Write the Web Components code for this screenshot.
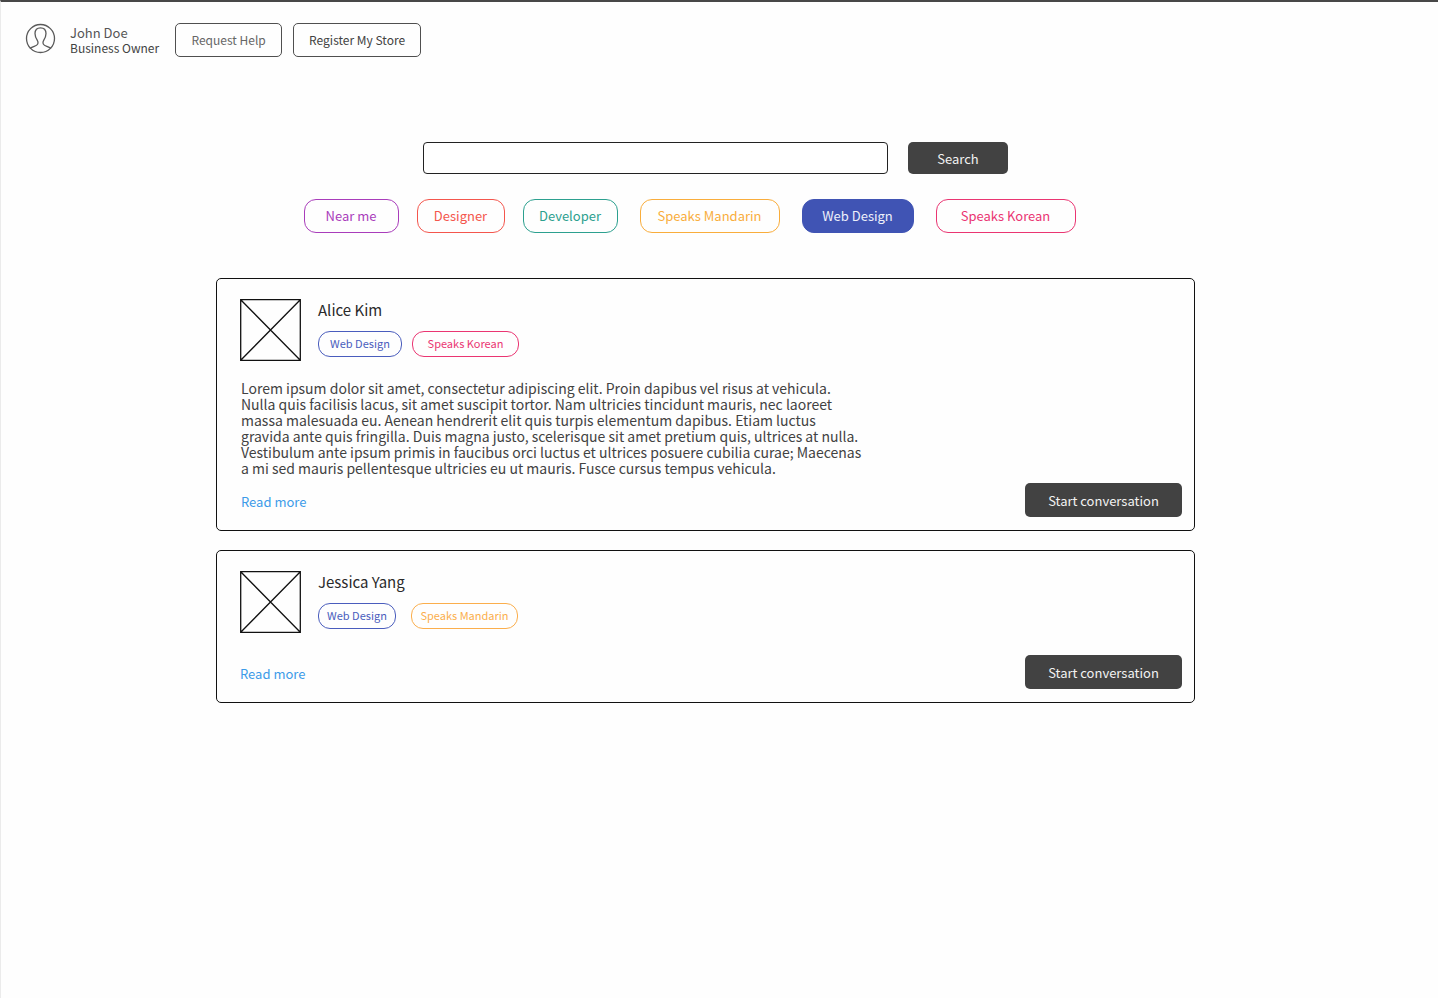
<!DOCTYPE html>
<html lang="en">
<head>
<meta charset="utf-8">
<meta name="viewport" content="width=device-width, initial-scale=1">
<title>Find help for your store</title>
<style>
  html { height: 100%; }
  body {
    margin: 0;
    min-height: 100%;
    box-sizing: border-box;
    border-top: 2px solid #484848;
    border-left: 1px solid #ebebeb;
    background: #fefefe;
    color: #424242;
    font: 13px/16px "Noto Sans CJK SC", "Noto Sans", sans-serif;
  }
</style>
</head>
<body>
<help-page></help-page>

<template id="t-page">
  <style>
    :host { display: block; }
    header { display: flex; align-items: center; padding: 21px 24px 0; }
    user-badge { margin-right: 16px; }
    .actions { display: flex; gap: 11px; }
    main { box-sizing: border-box; max-width: 1007px; margin: 0 auto; padding: 85px 28px 40px 0; }
    search-bar { margin-left: 20px; }
    .filters { display: flex; flex-wrap: wrap; justify-content: center; gap: 22px; margin: 25px 32px 45px 0; }
    .group { display: flex; flex-wrap: wrap; gap: 18px; }
    .group.wide { gap: 22px; }
    .results { display: grid; gap: 19px; }
    .soft { color: #666; }
  </style>
  <header>
    <user-badge><span slot="name">John Doe</span><span slot="role">Business Owner</span></user-badge>
    <nav class="actions" aria-label="Account">
      <action-button look="outline" size="s"><span class="soft">Request Help</span></action-button>
      <action-button look="outline" size="m">Register My Store</action-button>
    </nav>
  </header>
  <main>
    <search-bar></search-bar>
    <div class="filters">
      <div class="group">
        <filter-chip tone="purple" size="m">Near me</filter-chip>
        <filter-chip tone="red" size="s">Designer</filter-chip>
        <filter-chip tone="teal" size="m">Developer</filter-chip>
      </div>
      <div class="group wide">
        <filter-chip tone="amber" size="xl">Speaks Mandarin</filter-chip>
        <filter-chip tone="indigo" size="l" pressed>Web Design</filter-chip>
        <filter-chip tone="pink" size="xl">Speaks Korean</filter-chip>
      </div>
    </div>
    <div class="results">
      <person-card>
        <span slot="name">Alice Kim</span>
        <skill-tag slot="tags" tone="indigo" size="m">Web Design</skill-tag>
        <skill-tag slot="tags" tone="pink" size="l">Speaks Korean</skill-tag>
        <span slot="bio">Lorem ipsum dolor sit amet, consectetur adipiscing elit. Proin dapibus vel risus at vehicula. Nulla quis facilisis lacus, sit amet suscipit tortor. Nam ultricies tincidunt mauris, nec laoreet massa malesuada eu. Aenean hendrerit elit quis turpis elementum dapibus. Etiam luctus gravida ante quis fringilla. Duis magna justo, scelerisque sit amet pretium quis, ultrices at nulla. Vestibulum ante ipsum primis in faucibus orci luctus et ultrices posuere cubilia curae; Maecenas a mi sed mauris pellentesque ultricies eu ut mauris. Fusce cursus tempus vehicula.</span>
      </person-card>
      <person-card compact>
        <span slot="name">Jessica Yang</span>
        <skill-tag slot="tags" tone="indigo" size="s">Web Design</skill-tag>
        <skill-tag slot="tags" tone="amber" size="l">Speaks Mandarin</skill-tag>
      </person-card>
    </div>
  </main>
</template>

<template id="t-badge">
  <style>
    :host { display: flex; align-items: center; gap: 14px; }
    svg { display: block; width: 31px; height: 31px; margin-bottom: 3px; }
    .text { display: grid; font-size: 12px; line-height: 15px; }
    .name { font-size: 13px; color: #555; }
  </style>
  <svg viewBox="0 0 31 31" fill="none" stroke="#5a5a5a" stroke-width="1.3" stroke-linecap="round" stroke-linejoin="round" role="img" aria-label="Profile">
    <circle cx="15.5" cy="15.5" r="14"/>
    <path d="M5.300 25.200c1.700-1.300 4.500-2 6.200-2.900 1.900-1.100 1.900-3.200.7-5.100-1.400-2.200-2.200-4.200-2.200-6.600 0-3.700 2-5.800 5.500-5.800s5.500 2.100 5.500 5.800c0 2.400-.8 4.400-2.200 6.600-1.200 1.900-1.200 4 .7 5.100 1.700.9 4.500 1.600 6.200 2.900"/>
  </svg>
  <div class="text"><slot class="name" name="name"></slot><slot name="role"></slot></div>
</template>

<template id="t-button">
  <style>
    :host { display: block; }
    button {
      box-sizing: border-box; width: 157px; height: 34px; padding: 2px 0 0;
      border: 0; border-radius: 5px; background: #424242; color: #f2f2f2;
      font: inherit; font-size: 13px; line-height: 16px; white-space: nowrap; cursor: pointer;
    }
    :host([look="outline"]) button { padding: 0; background: transparent; border: 1px solid #4f4f4f; color: #424242; font-size: 12px; }
    :host([size="xs"]) button { width: 100px; height: 32px; }
    :host([size="s"]) button { width: 107px; }
    :host([size="m"]) button { width: 128px; }
  </style>
  <button type="button"><slot></slot></button>
</template>

<template id="t-search">
  <style>
    :host { display: block; }
    form { display: flex; justify-content: center; align-items: center; gap: 20px; }
    input {
      box-sizing: border-box; flex: 0 1 465px; min-width: 0; height: 32px; padding: 0 10px;
      border: 1px solid #222; border-radius: 4px; background: #fff; color: inherit; font: inherit;
    }
  </style>
  <form role="search">
    <input type="search" aria-label="Search for people">
    <action-button size="xs">Search</action-button>
  </form>
</template>

<template id="t-chip">
  <style>
    :host { display: block; --tone: #424242; }
    :host([tone="purple"]) { --tone: #a93dbb; }
    :host([tone="red"]) { --tone: #f4564d; }
    :host([tone="teal"]) { --tone: #2ca08f; }
    :host([tone="amber"]) { --tone: #f9ad3c; }
    :host([tone="indigo"]) { --tone: #4054b4; }
    :host([tone="pink"]) { --tone: #ea3572; }
    button {
      box-sizing: border-box; width: 95px; height: 34px; padding: 0;
      border: 1px solid var(--tone); border-radius: 12px; background: transparent; color: var(--tone);
      font: inherit; font-size: 13px; line-height: 16px; white-space: nowrap; cursor: pointer;
    }
    button[aria-pressed="true"] { background: var(--tone); color: #eef0fa; }
    :host([size="s"]) button { width: 88px; }
    :host([size="l"]) button { width: 112px; }
    :host([size="xl"]) button { width: 140px; }
  </style>
  <button type="button" aria-pressed="false"><slot></slot></button>
</template>

<template id="t-tag">
  <style>
    :host {
      --tone: #424242; box-sizing: border-box; display: flex; align-items: center; justify-content: center;
      width: 84px; height: 26px; padding-bottom: 2px; border: 1px solid var(--tone); border-radius: 12px;
      color: var(--tone); font-size: 11px; line-height: 16px; white-space: nowrap;
    }
    :host([tone="indigo"]) { --tone: #4a5dbd; }
    :host([tone="pink"]) { --tone: #ea3572; }
    :host([tone="amber"]) { --tone: #fbae4c; }
    :host([size="s"]) { width: 78px; }
    :host([size="l"]) { width: 107px; }
  </style>
  <slot></slot>
</template>

<template id="t-card">
  <style>
    :host { display: block; --tag-gap: 10px; --foot-gap: 7px; }
    :host([compact]) { --tag-gap: 15px; --foot-gap: 22px; }
    article { border: 1px solid #111; border-radius: 5px; padding: 20px 12px 13px 23px; }
    .head { display: flex; gap: 17px; }
    svg { display: block; flex: none; width: 61px; height: 62px; }
    h2 { margin: 0 0 11px; font-size: 15px; line-height: 21px; font-weight: 400; color: #2a2a2a; }
    .tags { display: flex; flex-wrap: wrap; gap: var(--tag-gap); }
    p { margin: 19px 0 0; padding-left: 1px; max-width: 622px; font-size: 14px; line-height: 16px; }
    :host([compact]) p { display: none; }
    footer { display: flex; justify-content: space-between; align-items: center; margin-top: var(--foot-gap); }
    a { padding: 4px 0 0 1px; color: #3c9be8; font-size: 13px; text-decoration: none; }
    :host([compact]) a { padding-left: 0; }
  </style>
  <article>
    <div class="head">
      <svg viewBox="0 0 61 62" fill="none" stroke="#111" stroke-width="1.3" aria-hidden="true">
        <path d="M.7.7h59.600v60.600H.7zM.7.7l59.600 60.600M60.300.7L.7 61.300"/>
      </svg>
      <div>
        <h2><slot name="name"></slot></h2>
        <div class="tags"><slot name="tags"></slot></div>
      </div>
    </div>
    <p><slot name="bio"></slot></p>
    <footer><a href="#profile">Read more</a><action-button>Start conversation</action-button></footer>
  </article>
</template>

<script>
  class TemplateElement extends HTMLElement {
    constructor() {
      super();
      const template = document.getElementById(this.constructor.template);
      this.attachShadow({ mode: "open" }).append(template.content.cloneNode(true));
    }
  }

  class ActionButton extends TemplateElement { static template = "t-button"; }
  class UserBadge extends TemplateElement { static template = "t-badge"; }
  class SkillTag extends TemplateElement { static template = "t-tag"; }
  class PersonCard extends TemplateElement { static template = "t-card"; }
  class HelpPage extends TemplateElement { static template = "t-page"; }

  class SearchBar extends TemplateElement {
    static template = "t-search";
    connectedCallback() {
      this.shadowRoot.querySelector("form").addEventListener("submit", e => e.preventDefault());
    }
  }

  class FilterChip extends TemplateElement {
    static template = "t-chip";
    static observedAttributes = ["pressed"];
    connectedCallback() {
      this.shadowRoot.querySelector("button").onclick = () => this.toggleAttribute("pressed");
    }
    attributeChangedCallback() {
      this.shadowRoot.querySelector("button").setAttribute("aria-pressed", this.hasAttribute("pressed"));
    }
  }

  customElements.define("action-button", ActionButton);
  customElements.define("user-badge", UserBadge);
  customElements.define("skill-tag", SkillTag);
  customElements.define("filter-chip", FilterChip);
  customElements.define("search-bar", SearchBar);
  customElements.define("person-card", PersonCard);
  customElements.define("help-page", HelpPage);
</script>
</body>
</html>
